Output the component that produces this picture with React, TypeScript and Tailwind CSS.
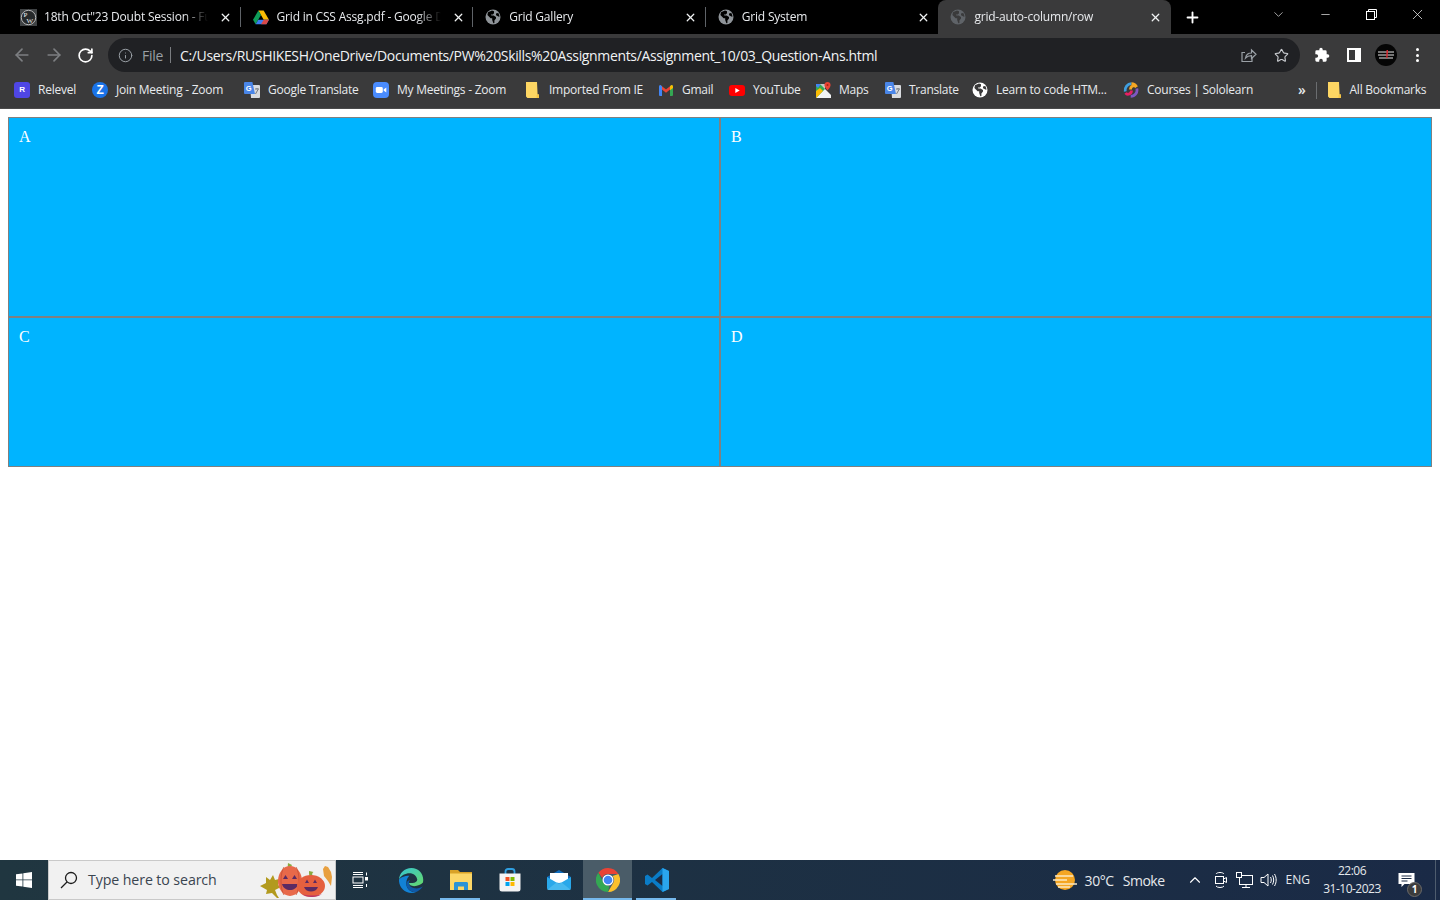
import { ArrowLeft, ArrowRight, ChevronDown, ChevronUp, Info, Minus, Plus, RotateCw, Star, X } from 'lucide-react';

const uiFont = "font-['Open_Sans',sans-serif]";

function Globe({ fill = '#9aa0a6', land = '#3a3a3a', size = 16 }: { fill?: string; land?: string; size?: number }) {
  return (
    <svg width={size} height={size} viewBox="0 0 16 16" className="shrink-0">
      <circle cx="8" cy="8" r="7.5" fill={fill} />
      <path d="M7 1.500 3 3.200 2.400 6l3.200 3.200h1.600v1.800l1.200 3.200 1-.2V11.500L11 9.600V8L8.600 6.600H6.400L6 5.400h1.800L9 4.200V2.200zM13 4l-2 .6v1.600l3 1.600.5-.2c-.1-1.400-.7-2.800-1.500-4z" fill={land} />
    </svg>
  );
}

function PwIcon() {
  return (
    <svg width="17" height="17" viewBox="0 0 17 17" className="shrink-0">
      <rect width="17" height="17" fill="#3f4244" />
      <circle cx="8.500" cy="8.500" r="7.200" fill="#26292b" stroke="#d8d8d8" strokeWidth="0.800" />
      <text x="3.400" y="8.400" fontSize="7" fill="#f2f2f2" fontFamily="Liberation Serif, serif">P</text>
      <text x="6.600" y="13.800" fontSize="7" fill="#f2f2f2" fontFamily="Liberation Serif, serif">W</text>
    </svg>
  );
}

function DriveIcon() {
  return (
    <svg width="16" height="15" viewBox="0 0 16 14" className="shrink-0">
      <path d="M5.400 0h5.200l5.400 9.200h-5.300z" fill="#fbbc04" />
      <path d="M5.400 0 0 9.300l2.600 4.500L8 4.500z" fill="#0f9d58" />
      <path d="M5.300 9.200H16l-2.600 4.600H2.600z" fill="#3b7cf0" />
      <path d="M10.700 9.200H16l-2.600 4.600H8z" fill="#ea4335" opacity="0.9" />
    </svg>
  );
}

function TranslateIcon() {
  return (
    <svg width="16" height="16" viewBox="0 0 16 16" className="shrink-0">
      <path d="M6 3h9a1 1 0 0 1 1 1v11a1 1 0 0 1-1 1H7z" fill="#d9dbdf" />
      <path d="M11 7h4M13 6v1M11.500 12l2.600-4.600" stroke="#6b6f74" strokeWidth="0.900" fill="none" />
      <path d="M1 0h7.400L11 12H1a1 1 0 0 1-1-1V1a1 1 0 0 1 1-1z" fill="#4a86e8" />
      <text x="1.700" y="8.600" fontSize="7.500" fontWeight="700" fill="#fff" fontFamily="Liberation Sans, sans-serif">G</text>
    </svg>
  );
}

function ZoomMeetIcon() {
  return (
    <svg width="16" height="16" viewBox="0 0 16 16" className="shrink-0">
      <rect width="16" height="16" rx="4" fill="#4a8cff" />
      <rect x="2.800" y="5" width="7" height="6" rx="1.400" fill="#fff" />
      <path d="m10.600 7.400 2.700-1.900v5l-2.700-1.900z" fill="#fff" />
    </svg>
  );
}

function FolderIcon() {
  return (
    <svg width="13" height="16" viewBox="0 0 13 16" className="shrink-0">
      <path d="M0 0h11l.6 12.600H13V16H1.400L0 14.600z" fill="#fdd663" />
      <path d="M11 0v12.600h2V16h-2.400l-.1-3H11z" fill="#f6c544" />
    </svg>
  );
}

function GmailIcon() {
  return (
    <svg width="14" height="11" viewBox="0 0 14 11" className="shrink-0">
      <path d="M1.200 1.500 7 6l5.800-4.500" fill="none" stroke="#ea4335" strokeWidth="2.600" />
      <path d="M0 1.500C0 .5.800 0 1.500 0L3 1.200V11H1a1 1 0 0 1-1-1z" fill="#4285f4" />
      <path d="M14 1.500C14 .5 13.200 0 12.500 0L11 1.200V11h2a1 1 0 0 0 1-1z" fill="#34a853" />
      <path d="M11 1.200 12.500 0C13.200 0 14 .5 14 1.500V3l-3 2.300z" fill="#fbbc04" />
    </svg>
  );
}

function YoutubeIcon() {
  return (
    <svg width="16" height="11" viewBox="0 0 16 11" className="shrink-0">
      <rect width="16" height="11" rx="3" fill="#ff0000" />
      <path d="m6.300 3 4.400 2.500-4.400 2.500z" fill="#fff" />
    </svg>
  );
}

function MapsIcon() {
  return (
    <svg width="15" height="16" viewBox="0 0 15 16" className="shrink-0">
      <path d="M0 2h9v14H0z" fill="#34a853" />
      <path d="M0 16 9 7l6 6v3z" fill="#f1f3f4" />
      <path d="M0 16V9l4-3 3 3z" fill="#fbbc04" />
      <path d="M0 2h5L2 6 0 4z" fill="#4285f4" />
      <path d="M9 7 4 2h5z" fill="#c4c7c5" />
      <path d="M11.500 0C9.800 0 8.400 1.300 8.400 3c0 2.200 3.100 5.400 3.100 5.400S14.600 5.200 14.600 3c0-1.700-1.400-3-3.100-3z" fill="#ea4335" />
      <circle cx="11.500" cy="3" r="1" fill="#a52714" />
    </svg>
  );
}

function SololearnIcon() {
  return (
    <svg width="16" height="16" viewBox="0 0 16 16" className="shrink-0" fill="none" strokeWidth="2.800">
      <path d="M2.200 9.500C1.500 5.500 4.500 1.700 8.500 1.700" stroke="#3f9fe0" />
      <path d="M8.500 1.700C10.700 1.700 12.500 3 13.500 5" stroke="#f4a623" />
      <path d="M13.500 5C11.500 2.500 7.500 4 7.500 7.500" stroke="#f4a623" />
      <path d="M13.800 6.500C14.800 10.500 12 14.300 7.700 14.300" stroke="#7e57c2" />
      <path d="M2.500 11C4.500 13.500 8.500 12 8.500 8.500" stroke="#e91e63" />
    </svg>
  );
}

function RoundLetter({ letter, bg, round }: { letter: string; bg: string; round: string }) {
  return (
    <span className={`flex h-4 w-4 shrink-0 items-center justify-center text-white font-bold font-['Liberation_Sans',sans-serif] ${bg} ${round}`}>
      {letter}
    </span>
  );
}

const tabs = [
  { icon: <PwIcon />, title: '18th Oct"23 Doubt Session - Fu', active: false, sep: true },
  { icon: <DriveIcon />, title: 'Grid in CSS Assg.pdf - Google D', active: false, sep: true },
  { icon: <Globe fill="#8f9499" land="#000" />, title: 'Grid Gallery', active: false, sep: true },
  { icon: <Globe fill="#8f9499" land="#000" />, title: 'Grid System', active: false, sep: false },
  { icon: <Globe fill="#5f6368" land="#3a3a3b" />, title: 'grid-auto-column/row', active: true, sep: false },
];

const bookmarks = [
  { width: 'w-[78px]', slot: 'w-[24px]', label: 'Relevel', icon: <span className="text-[8px]"><RoundLetter letter="R" bg="bg-[#4f46e5]" round="rounded-[3px]" /></span> },
  { width: 'w-[152px]', slot: 'w-[24px]', label: 'Join Meeting - Zoom', icon: <span className="text-[12px]"><RoundLetter letter="Z" bg="bg-[#1a73e8]" round="rounded-full" /></span> },
  { width: 'w-[129px]', slot: 'w-[24px]', label: 'Google Translate', icon: <TranslateIcon /> },
  { width: 'w-[153px]', slot: 'w-[24px]', label: 'My Meetings - Zoom', icon: <ZoomMeetIcon /> },
  { width: 'w-[133px]', slot: 'w-[23px]', label: 'Imported From IE', icon: <FolderIcon /> },
  { width: 'w-[70px]', slot: 'w-[23px]', label: 'Gmail', icon: <GmailIcon /> },
  { width: 'w-[87px]', slot: 'w-[24px]', label: 'YouTube', icon: <YoutubeIcon /> },
  { width: 'w-[69px]', slot: 'w-[23px]', label: 'Maps', icon: <MapsIcon /> },
  { width: 'w-[87px]', slot: 'w-[24px]', label: 'Translate', icon: <TranslateIcon /> },
  { width: 'w-[151px]', slot: 'w-[24px]', label: 'Learn to code HTM...', icon: <Globe fill="#fff" land="#3a3a3b" /> },
  { width: 'w-[160px]', slot: 'w-[24px]', label: 'Courses | Sololearn', icon: <SololearnIcon /> },
];

function TabStrip() {
  return (
    <div className={`flex h-[34px] shrink-0 items-end bg-black pl-2 text-[12px] text-[#e8eaed] ${uiFont}`}>
      {tabs.map((tab) => (
        <div
          key={tab.title}
          className={`relative flex h-[34px] w-[232.6px] shrink-0 items-center pl-[12px] ${tab.active ? 'rounded-t-[8px] bg-[#3a3a3b]' : ''}`}
        >
          <span className="flex w-[24px] shrink-0 items-center">{tab.icon}</span>
          <span className="w-[164px] overflow-hidden whitespace-nowrap tracking-[-0.2px] [mask-image:linear-gradient(to_right,black_85%,transparent)]">
            {tab.title}
          </span>
          <X size={13} strokeWidth={2.4} className="ml-[11px] shrink-0 text-[#f1f3f4]" />
          {tab.sep && <span className="absolute right-0 top-[7px] h-[20px] w-px bg-[#5f6368]" />}
        </div>
      ))}
      <div className="flex h-[34px] w-[44px] items-center justify-center">
        <Plus size={17} strokeWidth={2.6} className="text-white" />
      </div>
      <div className="ml-auto flex h-[28px] items-center self-start">
        <ChevronDown size={15} strokeWidth={1.2} className="mr-[16px] text-[#d5d5d5]" />
        <div className="flex w-[46px] justify-center"><Minus size={13} strokeWidth={1.2} className="text-white" /></div>
        <div className="flex w-[46px] justify-center">
          <svg width="11" height="11" viewBox="0 0 11 11" fill="none" stroke="#fff" strokeWidth="1">
            <rect x="0.500" y="2.500" width="8" height="8" />
            <path d="M2.500 2.500v-2h8v8h-2" />
          </svg>
        </div>
        <div className="flex w-[46px] justify-center"><X size={17} strokeWidth={1} className="text-white" /></div>
      </div>
    </div>
  );
}

function Toolbar() {
  return (
    <div className={`flex h-[38px] shrink-0 items-center bg-[#3a3a3b] pt-[4px] ${uiFont}`}>
      <div className="flex w-[108px] items-center pl-[12px]">
        <ArrowLeft size={20} strokeWidth={2} className="text-[#7d7f82]" />
        <ArrowRight size={20} strokeWidth={2} className="ml-[12px] text-[#7d7f82]" />
        <RotateCw size={17} strokeWidth={2.4} className="ml-[13px] text-white" />
      </div>
      <div className="flex h-[34px] w-[1192px] items-center rounded-full bg-[#202124] pl-[10px]">
        <Info size={15} strokeWidth={1.6} className="text-[#9aa0a6]" />
        <span className="ml-[9px] text-[14px] tracking-[-0.3px] text-[#9aa0a6]">File</span>
        <span className="ml-[7px] h-[16px] w-px bg-[#7a7d81]" />
        <span className="ml-[9px] whitespace-nowrap text-[14px] tracking-[-0.35px] text-[#f1f3f4]">
          C:/Users/RUSHIKESH/OneDrive/Documents/PW%20Skills%20Assignments/Assignment_10/03_Question-Ans.html
        </span>
        <svg width="16" height="15" viewBox="0 0 16 15" fill="none" stroke="#9aa0a6" strokeWidth="1.200" className="ml-auto">
          <path d="M11 9.500V13.500H1V4.500h3" />
          <path d="M4.500 10c.6-3.300 3-5 6-5V2l4.500 4.300L10.500 10.500V7.600c-2.500 0-4.500.7-6 2.400z" />
        </svg>
        <Star size={15} strokeWidth={1.8} className="ml-[17px] mr-[11px] text-[#c8cbcf]" />
      </div>
      <div className="flex flex-1 items-center pl-[14px]">
        <svg width="16" height="16" viewBox="0 0 24 24" fill="#fff">
          <path d="M20.500 11H19V7a2 2 0 0 0-2-2h-4V3.500a2.500 2.500 0 0 0-5 0V5H4a2 2 0 0 0-2 2v3.800h1.500a2.700 2.700 0 0 1 0 5.400H2V20a2 2 0 0 0 2 2h3.800v-1.500a2.700 2.700 0 0 1 5.400 0V22H17a2 2 0 0 0 2-2v-4h1.500a2.500 2.500 0 0 0 0-5z" />
        </svg>
        <div className="ml-[17px] h-[14px] w-[14px] border-2 border-white pl-[6px]">
          <div className="h-full w-full bg-white" />
        </div>
        <svg width="22" height="22" viewBox="0 0 22 22" className="ml-[14px]">
          <circle cx="11" cy="11" r="11" fill="#050505" />
          <path d="M3 8h16M3 11h16M4 14h14" stroke="#e6e6e6" strokeWidth="1.200" />
          <path d="M11.500 6h1.500l-.5 8h-1.200z" fill="#e3262e" />
        </svg>
        <div className="ml-[19px] flex flex-col gap-[2.500px]">
          <span className="h-[3px] w-[3px] rounded-full bg-white" />
          <span className="h-[3px] w-[3px] rounded-full bg-white" />
          <span className="h-[3px] w-[3px] rounded-full bg-white" />
        </div>
      </div>
    </div>
  );
}

function BookmarksBar() {
  return (
    <div className={`flex h-[37px] shrink-0 items-center border-b border-b-[#4a4a4b] bg-[#3a3a3b] pl-[14px] text-[12px] tracking-[-0.25px] text-[#e8eaed] ${uiFont}`}>
      {bookmarks.map((b) => (
        <div key={b.label} className={`flex shrink-0 items-center whitespace-nowrap ${b.width}`}>
          <span className={`flex shrink-0 items-center ${b.slot}`}>{b.icon}</span>
          {b.label}
        </div>
      ))}
      <span className="ml-[15px] text-[14px] font-semibold leading-none">»</span>
      <span className="ml-[10px] h-[17px] w-px bg-[#6b6d70]" />
      <div className="ml-[11px] flex items-center">
        <span className="flex w-[22px] items-center"><FolderIcon /></span>
        All Bookmarks
      </div>
    </div>
  );
}

function GridDemo() {
  const cell = 'border border-[#808080] bg-[#00b4ff] p-[10px] text-white';
  return (
    <main className="flex-1 bg-white p-2 font-['Liberation_Serif',serif] text-[16px] leading-[normal]">
      <div className="grid grid-cols-2 grid-rows-[200px_150px]">
        <div className={cell}>A</div>
        <div className={cell}>B</div>
        <div className={cell}>C</div>
        <div className={cell}>D</div>
      </div>
    </main>
  );
}

function Pumpkins() {
  return (
    <svg width="76" height="38" viewBox="0 0 76 38" className="shrink-0">
      <path d="M1 25 7 22l0-6 4 3 3-5 2 5 4-1-1 6 3 2-6 3 2 5 2 3-2 0-5-5-6 1 1-4z" fill="#b29a1e" />
      <path d="M29 2c-.5 3 0 5 .5 8h3c-.5-2-1-4 .5-6z" fill="#8aa83e" />
      <ellipse cx="31" cy="20" rx="12" ry="15" fill="#e8694a" />
      <path d="M25 6C21 12 21 28 25 34M37 6C41 12 41 28 37 34" fill="none" stroke="#c94f34" strokeWidth="0.800" />
      <path d="M24 18h5l-2.500-4zM33 18h5l-2.500-4z" fill="#5b2a63" />
      <path d="M23 23c2 8 14 8 16 0z" fill="#5b2a63" />
      <path d="M50 10c0 2 0 3 .5 5h3c-.5-1.500-.5-3 1-4z" fill="#8aa83e" />
      <ellipse cx="52" cy="25" rx="14" ry="11" fill="#e5603f" />
      <path d="M46 22h4l-2-3.500zM54 22h4l-2-3.500z" fill="#5b2a63" />
      <path d="M45 26c2 6 12 6 14 0z" fill="#5b2a63" />
      <path d="M43 33c5 4 15 4 20 0-5 2-15 2-20 0z" fill="#b8336a" />
      <path d="M64 8l2-3 3 1 3 5 1 5-1 9-3-5-4-5z" fill="#e8a040" />
    </svg>
  );
}

function PinnedApp({ children, active, underline }: { children: React.ReactNode; active?: boolean; underline?: string }) {
  return (
    <div className={`relative flex h-[40px] w-[49px] items-center justify-center ${active ? 'bg-[#4a5c68]' : ''}`}>
      {children}
      {underline && <span className={`absolute bottom-0 h-[2px] bg-[#76b9ed] ${underline}`} />}
    </div>
  );
}

function Taskbar() {
  return (
    <footer className="flex h-[40px] shrink-0 items-center bg-gradient-to-r from-[#203640] to-[#1a2a46] font-['Open_Sans',sans-serif] text-[#e6e9ec]">
      <div className="flex h-[40px] w-[48px] items-center justify-center">
        <svg width="16" height="16" viewBox="0 0 16 16" fill="#fff">
          <path d="M0 2.300 6.500 1.400V7.500H0zM7.300 1.300 16 0V7.500H7.300zM0 8.300H6.500V14.600L0 13.700zM7.300 8.300H16V16L7.300 14.700z" />
        </svg>
      </div>
      <div className="flex h-[40px] w-[288px] items-center overflow-hidden border border-[#c9c9c9] bg-[#f1f1f1] pl-[11px]">
        <svg width="18" height="18" viewBox="0 0 18 18" fill="none" stroke="#1c1c1c" strokeWidth="1.300">
          <circle cx="11" cy="7" r="5.500" />
          <path d="M7 11 1 17" />
        </svg>
        <span className="ml-[10px] whitespace-nowrap text-[14.200px] tracking-[-0.1px] text-[#3a4550]">Type here to search</span>
        <span className="ml-auto flex"><Pumpkins /></span>
      </div>
      <div className="flex h-[40px] w-[48px] items-center justify-center">
        <svg width="16" height="16" viewBox="0 0 16 16" fill="none" stroke="#fff" strokeWidth="1">
          <path d="M1 .500h10M1 2.500h10M1 13.500h10M1 15.500h10" />
          <rect x="1" y="5" width="10" height="6" />
          <rect x="13.500" y="5.500" width="2" height="2.500" fill="#fff" />
          <path d="M14.500 .500v3M14.500 12v3" />
        </svg>
      </div>
      <div className="flex pl-[3px]">
        <PinnedApp>
          <svg width="25" height="25" viewBox="0 0 24 24">
            <defs>
              <linearGradient id="edge-a" x1="0" y1="0" x2="1" y2="1">
                <stop offset="0" stopColor="#36c6d3" />
                <stop offset="1" stopColor="#66d96a" />
              </linearGradient>
            </defs>
            <path d="M12 0C5 0 .5 5 0 11c2-4 6-6 10-6s7 2.500 7.500 6c.3 2-2 3.500-4.500 3.500H9.500c.2 1.500 2 3 5 3 3.500 0 6.500-1.500 8.500-3.500C24.500 6.500 19.500 0 12 0z" fill="url(#edge-a)" />
            <path d="M0 11c-.5 7 5 13 12 13 1.500 0 3-.3 4.500-1-4 .5-9-2-9.500-7.500C6.700 11 9 8.500 10 7.500 5 7.500 1 9.500 0 11z" fill="#1282d6" />
            <path d="M7 15.500c.4 5 5.400 8 9.500 7.500 2.500-1 4.500-2.700 6.500-5.500-2 1.500-5 2.500-8 2-3.500-.5-5.500-2.500-5.500-5 0-1 .3-2 1-3-2 .5-3.500 2-3.500 4z" fill="#0f5aa8" />
          </svg>
        </PinnedApp>
        <PinnedApp underline="left-[4px] right-[5px]">
          <svg width="24" height="22" viewBox="0 0 24 22">
            <path d="M1 1h8l2 2h12v18H1z" fill="#d9a227" />
            <rect x="1" y="4.500" width="22" height="16.500" fill="#fcd768" />
            <path d="M5 21v-6.500c0-1 .8-1.500 1.500-1.500h11c.8 0 1.500.5 1.500 1.500V21h-4v-3.500H9V21z" fill="#2b93d6" />
          </svg>
        </PinnedApp>
        <PinnedApp>
          <svg width="24" height="24" viewBox="0 0 24 24">
            <path d="M7.500 6V3.500c0-1.500 1-2.500 2.500-2.500h4c1.500 0 2.500 1 2.500 2.500V6" fill="none" stroke="#2f9fe0" strokeWidth="1.800" />
            <path d="M1.500 5.500h21V21a2.500 2.500 0 0 1-2.500 2.500H4A2.500 2.500 0 0 1 1.500 21z" fill="#f4f4f4" />
            <rect x="7.500" y="9" width="4" height="4" fill="#f25022" />
            <rect x="12.500" y="9" width="4" height="4" fill="#7fba00" />
            <rect x="7.500" y="14" width="4" height="4" fill="#00a4ef" />
            <rect x="12.500" y="14" width="4" height="4" fill="#ffb900" />
          </svg>
        </PinnedApp>
        <PinnedApp>
          <svg width="24" height="20" viewBox="0 0 24 20">
            <path d="M12 0 24 7v11.500H0V7z" fill="#0f6cbd" />
            <path d="M3 3h18v10H3z" fill="#fff" />
            <path d="M0 7l12 7 12-7v11a2 2 0 0 1-2 2H2a2 2 0 0 1-2-2z" fill="#29a8ea" />
            <path d="M0 20 10 12l2 1 2-1 10 8z" fill="#5cc4f2" opacity="0.6" />
          </svg>
        </PinnedApp>
        <PinnedApp active underline="left-0 right-0">
          <svg width="24" height="24" viewBox="0 0 24 24">
            <path d="M12 0a12 12 0 0 1 10.400 6H12a6 6 0 0 0-5.700 4.100L2.400 4.700A12 12 0 0 1 12 0z" fill="#ea4335" />
            <path d="M22.400 6A12 12 0 0 1 12 24l5.200-9A6 6 0 0 0 16.500 8z" fill="#fbc02d" />
            <path d="M2.400 4.700 7.500 15a6 6 0 0 0 5.700 2.900L12 24A12 12 0 0 1 2.400 4.700z" fill="#34a853" />
            <circle cx="12" cy="12" r="5.500" fill="#fff" />
            <circle cx="12" cy="12" r="4.300" fill="#4285f4" />
          </svg>
        </PinnedApp>
        <PinnedApp underline="left-[4px] right-[5px]">
          <svg width="24" height="24" viewBox="0 0 24 24">
            <path d="M17.500 0 24 3v18l-6.500 3L7 14l-4.500 3.500L0 16V8l2.500-1.500L7 10z" fill="#0a7cc7" />
            <path d="M17.500 6 10 12l7.500 6z" fill="#1b2b44" />
            <path d="M17.500 0 24 3v18l-6.500 3z" fill="#2aa5ee" />
          </svg>
        </PinnedApp>
      </div>
      <div className="ml-auto flex h-[40px] items-center">
        <svg width="24" height="20" viewBox="0 0 24 20">
          <circle cx="12" cy="10" r="10" fill="#f5a623" />
          <path d="M2 6h18M0 10h14M3 14h21M5 17h12" stroke="#fbe9c4" strokeWidth="1.300" />
        </svg>
        <span className="ml-[8px] text-[14px] tracking-[-0.4px]">30°C</span>
        <span className="ml-[9px] text-[14px] tracking-[-0.5px]">Smoke</span>
        <ChevronUp size={18} strokeWidth={1.500} className="ml-[21px] text-white" />
        <svg width="14" height="18" viewBox="0 0 14 18" fill="none" stroke="#fff" strokeWidth="1" className="ml-[10px]">
          <path d="M2 3c1-2 7-2 8 0M2 15c1 2 7 2 8 0" />
          <rect x="1.500" y="5.500" width="8" height="7" />
          <path d="m9.500 8 3-1.500v5l-3-1.500" />
        </svg>
        <svg width="17" height="16" viewBox="0 0 17 16" fill="none" stroke="#fff" strokeWidth="1" className="ml-[8px]">
          <rect x="3.500" y="3.500" width="13" height="9" />
          <rect x="0.500" y="0.500" width="5" height="5" fill="#1b2b44" />
          <path d="M10 12.500v2.500M6 15.500h8" />
        </svg>
        <svg width="17" height="16" viewBox="0 0 17 16" fill="none" stroke="#fff" strokeWidth="1" className="ml-[7px]">
          <path d="M1 5.500h3L8 2v12L4 10.500H1z" />
          <path d="M10.500 5c1 1.800 1 4.200 0 6M12.500 3.500c1.600 2.800 1.600 6.200 0 9M14.500 2c2.200 3.700 2.200 8.300 0 12" />
        </svg>
        <span className="ml-[9px] text-[12px]">ENG</span>
        <div className="ml-[7px] flex w-[70px] flex-col items-center text-[12px] leading-[18px] tracking-[-0.5px]">
          <span>22:06</span>
          <span>31-10-2023</span>
        </div>
        <div className="relative ml-[4px] flex h-[40px] w-[49px] items-center pl-[7px]">
          <svg width="17" height="15" viewBox="0 0 16 15" fill="#fff">
            <path d="M0 0h16v11H6l-3 3v-3H0z" />
            <path d="M3 3h10M3 5.500h10M3 8h6" stroke="#1b2b44" strokeWidth="1" />
          </svg>
          <span className="absolute left-[16px] top-[22px] flex h-[15px] w-[15px] items-center justify-center rounded-full border border-[#6a6a6a] bg-[#3c3c3c] text-[10px] font-bold text-white">1</span>
          <span className="absolute right-[4px] top-0 h-[40px] w-px bg-[#4e5c6e]" />
        </div>
      </div>
    </footer>
  );
}

export default function App() {
  return (
    <div className="flex h-screen flex-col overflow-hidden bg-white">
      <TabStrip />
      <Toolbar />
      <BookmarksBar />
      <GridDemo />
      <Taskbar />
    </div>
  );
}
